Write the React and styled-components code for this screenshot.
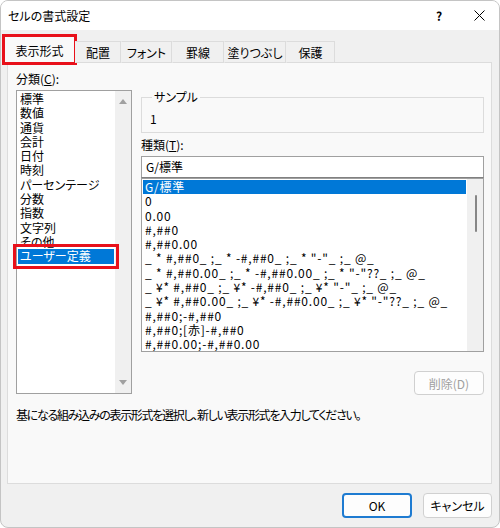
import React from 'react';
import styled, { createGlobalStyle } from 'styled-components';

const GlobalStyle = createGlobalStyle`
    html, body {
        margin: 0;
        padding: 0;
        background: #ffffff;
    }
    body {
        font-family: "Noto Sans CJK JP", "Noto Sans", sans-serif;
        font-size: 12px;
        font-feature-settings: "palt";
        color: #000000;
    }
    * {
        box-sizing: border-box;
    }
`;

const Window = styled.div`
    width: 500px;
    height: 528px;
    border: 1px solid #c4c4c4;
    border-radius: 8px;
    overflow: hidden;
    background: #f0f0f0;
    display: flex;
    flex-direction: column;
`;

const TitleBar = styled.div`
    height: 29px;
    flex: none;
    background: #ffffff;
    display: flex;
    align-items: center;
    padding-left: 7px;
    font-size: 12px;
`;

const Title = styled.span`
    flex: 1;
`;

const TitleButton = styled.span`
    width: 40px;
    display: flex;
    justify-content: center;
    align-items: center;
    font-weight: bold;
    font-size: 12px;
`;

const TabStrip = styled.div`
    display: flex;
    align-items: flex-end;
    height: 32px;
    padding-left: 3px;
    position: relative;
    z-index: 1;
`;

const Tab = styled.div`
    width: ${(p) => p.$w}px;
    height: ${(p) => (p.$active ? 27 : 22)}px;
    margin-bottom: -1px;
    display: flex;
    align-items: center;
    justify-content: center;
    white-space: nowrap;
    padding-top: ${(p) => (p.$active ? 2 : 0)}px;
    background: ${(p) => (p.$active ? '#f9f9f9' : '#f0f0f0')};
    border: 1px solid #dcdcdc;
    border-left-color: ${(p) => (p.$first || p.$active ? '#dcdcdc' : 'transparent')};
    border-bottom-color: ${(p) => (p.$active ? '#f9f9f9' : '#dcdcdc')};
    outline: ${(p) => (p.$active ? '3px solid #e8101a' : 'none')};
    outline-offset: -1px;
`;

const Panel = styled.div`
    margin: 0 7px 0 6px;
    height: 422px;
    background: #f9f9f9;
    border: 1px solid #dcdcdc;
    padding: 8px 7px 0 8px;
    display: flex;
    flex-direction: column;
`;

const Columns = styled.div`
    display: flex;
    gap: 9px;
`;

const LeftColumn = styled.div`
    width: 116px;
    display: flex;
    flex-direction: column;
`;

const RightColumn = styled.div`
    flex: 1;
    display: flex;
    flex-direction: column;
`;

const Label = styled.div`
    line-height: 16px;
    height: 16px;
    margin-top: ${(p) => p.$mt || 0}px;
`;

const Key = styled.span`
    text-decoration: underline;
`;

const ListBox = styled.div`
    position: relative;
    height: ${(p) => p.$h}px;
    margin-top: ${(p) => p.$mt || 0}px;
    background: #ffffff;
    border: 1px solid #a0a0a0;
    display: flex;
`;

const Items = styled.div`
    flex: 1;
    padding: 1px 1px 0 1px;
    min-width: 0;
    letter-spacing: ${(p) => p.$spacing || 0}px;
`;

const Item = styled.div`
    height: 14.3px;
    line-height: 14.3px;
    padding-left: ${(p) => p.$pad}px;
    white-space: nowrap;
    background: ${(p) => (p.$selected ? '#0078d7' : 'transparent')};
    color: ${(p) => (p.$selected ? '#ffffff' : '#000000')};
    outline: ${(p) => (p.$marked ? '3px solid #e8101a' : 'none')};
    outline-offset: 2px;
    position: relative;
`;

const ScrollTrack = styled.div`
    width: 16px;
    flex: none;
    background: #f0f0f0;
    display: flex;
    flex-direction: column;
    align-items: center;
    justify-content: ${(p) => (p.$thumbOnly ? 'flex-start' : 'space-between')};
    padding: 8px 0;
`;

const ThinThumb = styled.div`
    width: 2px;
    height: 37px;
    margin-left: 1px;
    margin-top: 8px;
    border-radius: 1px;
    background: #868686;
`;

const Arrow = styled.div`
    width: 0;
    height: 0;
    border-left: 4px solid transparent;
    border-right: 4px solid transparent;
    ${(p) => (p.$down ? 'border-top: 5px solid #a0a0a0;' : 'border-bottom: 5px solid #a0a0a0;')}
`;

const GroupBox = styled.fieldset`
    margin: 18px 0 0 0;
    padding: 6px 8px 4px 8px;
    border: 1px solid #dcdcdc;
    height: 44px;
`;

const Legend = styled.legend`
    padding: 0 2px;
    margin-left: 2px;
    line-height: 16px;
`;

const SampleValue = styled.div`
    line-height: 16px;
`;

const TextInput = styled.div`
    margin-top: 3px;
    height: 22px;
    background: #ffffff;
    border: 1px solid #a0a0a0;
    border-bottom-color: #808080;
    line-height: 20px;
    padding-left: 4px;
`;

const ButtonRow = styled.div`
    display: flex;
    justify-content: flex-end;
    gap: 11px;
    margin-top: ${(p) => p.$mt || 0}px;
    padding-right: ${(p) => p.$pr || 0}px;
`;

const Button = styled.div`
    width: ${(p) => p.$w}px;
    height: ${(p) => (p.$h ? p.$h : 24)}px;
    border-radius: 4px;
    background: #fdfdfd;
    border: ${(p) => (p.$default ? '2px solid #1e7bd1' : '1px solid #d0d0d0')};
    color: ${(p) => (p.$disabled ? '#a0a0a0' : '#000000')};
    display: flex;
    align-items: center;
    justify-content: center;
`;

const Hint = styled.div`
    margin-top: 12px;
    line-height: 16px;
    letter-spacing: -1.3px;
`;

const categories = [
    '標準',
    '数値',
    '通貨',
    '会計',
    '日付',
    '時刻',
    'パーセンテージ',
    '分数',
    '指数',
    '文字列',
    'その他',
    'ユーザー定義',
];

const formats = [
    'G/標準',
    '0',
    '0.00',
    '#,##0',
    '#,##0.00',
    '_ * #,##0_ ;_ * -#,##0_ ;_ * "-"_ ;_ @_',
    '_ * #,##0.00_ ;_ * -#,##0.00_ ;_ * "-"??_ ;_ @_',
    '_ ¥* #,##0_ ;_ ¥* -#,##0_ ;_ ¥* "-"_ ;_ @_',
    '_ ¥* #,##0.00_ ;_ ¥* -#,##0.00_ ;_ ¥* "-"??_ ;_ @_',
    '#,##0;-#,##0',
    '#,##0;[赤]-#,##0',
    '#,##0.00;-#,##0.00',
];

const tabs = [
    { label: '表示形式', w: 71 },
    { label: '配置', w: 46 },
    { label: 'フォント', w: 51 },
    { label: '罫線', w: 52 },
    { label: '塗りつぶし', w: 62 },
    { label: '保護', w: 49 },
];

function CloseIcon() {
    return (
        <svg width="11" height="11" viewBox="0 0 11 11">
            <path d="M0.5 0.5 L10.5 10.5 M10.5 0.5 L0.5 10.5" stroke="#000" strokeWidth="1" fill="none" />
        </svg>
    );
}

export default function App() {
    return (
        <>
            <GlobalStyle />
            <Window>
                <TitleBar>
                    <Title>セルの書式設定</Title>
                    <TitleButton>?</TitleButton>
                    <TitleButton>
                        <CloseIcon />
                    </TitleButton>
                </TitleBar>

                <TabStrip>
                    {tabs.map((t, i) => (
                        <Tab key={t.label} $w={t.w} $active={i === 0} $first={i === 0}>
                            {t.label}
                        </Tab>
                    ))}
                </TabStrip>

                <Panel>
                    <Columns>
                        <LeftColumn>
                            <Label>
                                分類(<Key>C</Key>):
                            </Label>
                            <ListBox $h={304} $mt={3}>
                                <Items>
                                    {categories.map((c, i) => (
                                        <Item
                                            key={c}
                                            $pad={2}
                                            $selected={i === categories.length - 1}
                                            $marked={i === categories.length - 1}
                                        >
                                            {c}
                                        </Item>
                                    ))}
                                </Items>
                                <ScrollTrack>
                                    <Arrow />
                                    <Arrow $down />
                                </ScrollTrack>
                            </ListBox>
                        </LeftColumn>

                        <RightColumn>
                            <GroupBox>
                                <Legend>サンプル</Legend>
                                <SampleValue>1</SampleValue>
                            </GroupBox>
                            <Label $mt={4}>
                                種類(<Key>T</Key>):
                            </Label>
                            <TextInput>G/標準</TextInput>
                            <ListBox $h={174} $mt={0}>
                                <Items $spacing={0.8}>
                                    {formats.map((f, i) => (
                                        <Item key={f} $pad={2} $selected={i === 0}>
                                            {f}
                                        </Item>
                                    ))}
                                </Items>
                                <ScrollTrack $thumbOnly>
                                    <ThinThumb />
                                </ScrollTrack>
                            </ListBox>
                            <ButtonRow $mt={19}>
                                <Button $w={70} $disabled>
                                    削除(D)
                                </Button>
                            </ButtonRow>
                        </RightColumn>
                    </Columns>
                    <Hint>基になる組み込みの表示形式を選択し、新しい表示形式を入力してください。</Hint>
                </Panel>

                <ButtonRow $mt={9} $pr={7}>
                    <Button $w={70} $h={25} $default>
                        OK
                    </Button>
                    <Button $w={69} $h={25}>
                        キャンセル
                    </Button>
                </ButtonRow>
            </Window>
        </>
    );
}
